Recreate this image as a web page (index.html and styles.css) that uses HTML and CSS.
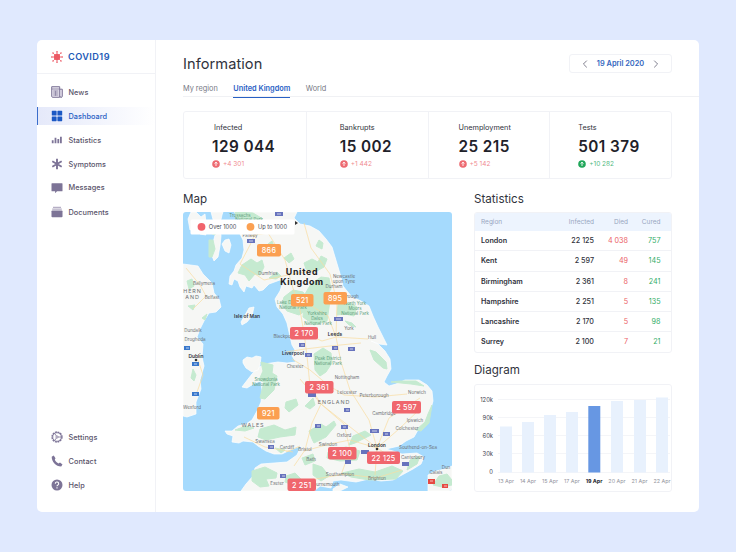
FILE: index.html
```html
<!DOCTYPE html>
<html lang="en">
<head>
<meta charset="utf-8">
<title>COVID19 Dashboard</title>
<link rel="stylesheet" href="styles.css">
</head>
<body>
<div class="app">
  <aside class="sidebar">
    <div class="logo">
      <svg width="12" height="12" viewBox="0 0 12 12"><circle cx="6" cy="6" r="3.2" fill="#ec5b66"/><path d="M6 .8v10.400M.8 6h10.400M2.200 2.200l7.600 7.600M9.800 2.200l-7.600 7.600" stroke="#ec5b66" stroke-width=".8"/><g fill="#ec5b66"><circle cx="6" cy=".8" r=".8"/><circle cx="6" cy="11.200" r=".8"/><circle cx=".8" cy="6" r=".8"/><circle cx="11.200" cy="6" r=".8"/><circle cx="2" cy="2" r=".8"/><circle cx="10" cy="2" r=".8"/><circle cx="2" cy="10" r=".8"/><circle cx="10" cy="10" r=".8"/></g></svg>
      <span>COVID19</span>
    </div>
    <nav class="nav">
      <a class="item"><svg class="icon" viewBox="0 0 12 12"><path d="M.7.7h8v10.600H1.700a1 1 0 0 1-1-1zM8.700 3.200h2.600v7a1.200 1.200 0 0 1-2.400 0" fill="#e4dfec" stroke="#7d7497"/><path d="M.7 3h8M2.300 5h5M2.300 7h5M2.300 9h5M4.600 4.800v5" stroke="#7d7497" stroke-width=".7"/></svg>News</a>
      <a class="item active"><svg class="icon" viewBox="0 0 12 12" fill="#1c59c4"><rect x=".8" y=".8" width="4.800" height="4.800" rx=".6"/><rect x="6.400" y=".8" width="4.800" height="4.800" rx=".6"/><rect x=".8" y="6.400" width="4.800" height="4.800" rx=".6"/><rect x="6.400" y="6.400" width="4.800" height="4.800" rx=".6"/></svg>Dashboard</a>
      <a class="item"><svg class="icon" viewBox="0 0 12 12" fill="#7d7497"><path d="M.8 6.200h1.800v3H.8zM3.600 3.800h1.800v5.400H3.600zM6.400 5h1.800v4.200H6.400zM9 2.800h1.800v6.400H9z"/></svg>Statistics</a>
      <a class="item"><svg class="icon" viewBox="0 0 12 12"><path d="M6 .8v10.400M1.300 3.300l9.400 5.400M10.700 3.300L1.300 8.700" stroke="#7d7497" stroke-width="1.900"/></svg>Symptoms</a>
      <a class="item up"><svg class="icon" viewBox="0 0 12 12"><path d="M1 1.300h10q.5 0 .5.500v7q0 .5-.5.500H6l-1.900 2v-2H1q-.5 0-.5-.5v-7q0-.5.500-.5z" fill="#7d7497"/></svg>Messages</a>
      <a class="item"><svg class="icon" viewBox="0 0 12 12"><path d="M2 .8h8v1.200H2zM1.200 2.500h9.600v1.300H1.200z" fill="#b6afc5"/><rect x=".5" y="4.500" width="11" height="6.800" rx=".8" fill="#7d7497"/></svg>Documents</a>
    </nav>
    <nav class="nav bottom">
      <a class="item"><svg class="icon" viewBox="0 0 12 12" fill="none" stroke="#7d7497"><circle cx="6" cy="6" r="5" stroke-width="1.300" stroke-dasharray="1.900 .718"/><circle cx="6" cy="6" r="4.300" stroke-width=".9"/><circle cx="6" cy="6" r="1.100" stroke-width=".8"/><path d="M7 6h3M5.400 5L3.800 2.600M5.400 7L3.800 9.400" stroke-width=".8"/></svg>Settings</a>
      <a class="item"><svg class="icon" viewBox="0 0 12 12"><path d="M2.700.5L.7 1.700C.5 6.700 5.200 11.500 10.200 11.400L11.500 9.400 9 7.500 7.500 8.400C6 7.700 4.600 6.300 3.800 4.700L4.500 3.200z" fill="#7d7497"/></svg>Contact</a>
      <a class="item"><svg class="icon" viewBox="0 0 12 12"><circle cx="6" cy="6" r="5.500" fill="#7d7497"/><path d="M4.300 4.700a1.700 1.600 0 1 1 2.600 1.300Q6 6.500 6 7.300M6 8.300v1.100" stroke="#fff" fill="none" stroke-width="1.100"/></svg>Help</a>
    </nav>
  </aside>

  <main class="main">
    <header class="head">
      <h1>Information</h1>
      <div class="date">
        <svg width="6" height="8" viewBox="0 0 6 8"><path d="M4.800.6L1.400 4l3.400 3.400"/></svg>
        <span>19 April 2020</span>
        <svg width="6" height="8" viewBox="0 0 6 8"><path d="M1.200.6L4.600 4 1.200 7.400"/></svg>
      </div>
    </header>
    <div class="tabs"><span class="tab region">My region</span><span class="tab on">United Kingdom</span><span class="tab">World</span></div>

    <section class="cards">
      <div class="card c1"><span class="label">Infected</span><b class="num">129 044</b><span class="delta"><svg viewBox="0 0 8 8"><circle cx="4" cy="4" r="3.800"/><path d="M4 6V2.200M2.500 3.600L4 2.200l1.500 1.400"/></svg>+4 301</span></div>
      <div class="card c2"><span class="label">Bankrupts</span><b class="num">15 002</b><span class="delta"><svg viewBox="0 0 8 8"><circle cx="4" cy="4" r="3.800"/><path d="M4 6V2.200M2.500 3.600L4 2.200l1.500 1.400"/></svg>+1 442</span></div>
      <div class="card c3"><span class="label">Unemployment</span><b class="num">25 215</b><span class="delta"><svg viewBox="0 0 8 8"><circle cx="4" cy="4" r="3.800"/><path d="M4 6V2.200M2.500 3.600L4 2.200l1.500 1.400"/></svg>+5 142</span></div>
      <div class="card c4"><span class="label">Tests</span><b class="num">501 379</b><span class="delta good"><svg viewBox="0 0 8 8"><circle cx="4" cy="4" r="3.800"/><path d="M4 6V2.200M2.500 3.600L4 2.200l1.500 1.400"/></svg>+10 282</span></div>
    </section>

    <div class="columns">
      <section class="mapcol">
        <h2>Map</h2>
        <svg class="map" viewBox="183 212 269 279">
          <rect x="183" y="212" width="269" height="279" fill="#a5dafd"/>
          <g class="land">
            <path d="M234 212L241 220 237 228 243 240 244 250 242 258 236 265 234 271 230 276 229 284 232 285 234 279 238 281 240 287 244 292 246 286 252 288 254 285 259 291 263 290 269 284 280 280 283 282 280 291 275 299 277 307 283 314 287 323 289 332 292 345 295 350 292 356 296 362 287 363 278 362 264 364 258 368 252 374 245 383 242 387 247 388 255 383 261 381 262 390 261 402 257 411 252 420 246 424 238 426 232 431 225 431 227 434 233 436 232 442 239 443 243 441 253 442 258 446 266 451 274 454 282 454 290 450 301 446 297 455 287 462 274 463 261 464 255 468 253 476 246 484 241 491 314 491 320 486 331 488 333 481 341 480 356 482 369 479 381 481 393 480 402 475 413 469 421 464 424 457 417 453 402 454 393 451 386 449 399 446 406 441 414 437 418 430 426 423 430 412 433 401 432 391 427 385 419 380 405 380 396 384 389 386 384 382 387 376 391 369 390 359 385 351 378 344 371 341 379 344 387 345 382 335 378 327 373 316 369 306 361 301 352 297 347 291 343 286 341 277 338 267 335 257 332 247 326 239 319 231 310 226 300 224 294 218 297 212Z"/>
            <path d="M211 212L214 223 216 231 213 243 211 253 214 261 218 257 220 246 221 236 220 224 222 215 223 212ZM225 240l4-1 2 6-2 8-4-2-3-7ZM183 264L198 266 203 274 212 283 214 293 219 299 221 307 216 312 209 313 204 321 200 329 197 337 203 344 202 357 204 366 200 380 201 389 196 402 196 414 187 417 183 416ZM196 212L201 217 205 214 206 223 202 225 206 235 200 234 195 228 190 230 188 219 191 212ZM241 322l8-14 5-1-2 9-5 6-5 3ZM243 360l4-3 5 1 4-2 5 1-1 8-2 5-6 2-6-4-3-5ZM333 489l7-5 8 3-8 4-7 0ZM428 491L428 475 436 471 445 469 452 466V491Z"/>
          </g>
          <g class="green">
            <path d="M235 212l18 1 10 6-16 2-11-3ZM209 240l4 0 2 9-3 8-3 0ZM242 265l9-6 6 4 5-3 2 7-4 8-5-1-6 7-4-6-7-2ZM269 278l8-6 4 4-5 3ZM284 258l7-5 3 6-5 4ZM304 263l8-4 6 3 3-6 6 3-3 8-9 5-9-3ZM311 284l10-7 8 1 2 11-5 8-12 2-9-5ZM284 297l9-7 10 2 6 8-1 9-9 6-12-4-5-7ZM313 299l12-4 5 6-3 20-13 4-11-8 1-12ZM338 304l12-1 7 4-3 9-9-2-8 1ZM316 246l3-6 4 3-1 6ZM268 244l4-3 2 5-4 2ZM275 223l7-2 3 8-6 0ZM345 321l7 2 4 4-7-2ZM370 350l6 2 10 10 1 7-4-1-9-8ZM314 354l9-6 8 5 1 10-6 9-6 4-5-6ZM261 362l12 3-1 8 5 3-3 14-9 9-5-1 4-16-5-2 4-9ZM286 402l10-3 2 6-9 7-4-4ZM305 406l8-8 2 7-5 4ZM260 429l14-4 11 5 11-3-1 8-15 2-14 3-8-3ZM246 426l8 2-9 3-10-1ZM309 431l12-7 5 3 8-6 2 4-10 12-12 6-2-4ZM353 436l12-5 6 4-16 8-6 2ZM328 452l18-5 14 4-3 9-17 1-13-3ZM342 473l17-4 16 3 17-6 11 5-7 8-27 1-18-3ZM313 464l9 3 7 9-8 5-8-6ZM252 471l13-4 12 6-1 5-10 1 3 7-9 1-8-6ZM286 476l9-3 7 7-9 5-8-3ZM416 430l9-8 3-8 4-9-3 18-8 8ZM391 382l9-1 16 0 8 5-13-2ZM410 460l10-4-3 8-10 6Z"/>
            <path d="M193 369l3 6-2 6-3-3ZM187 281l5-2 2 7-5 3ZM188 306l7-1-2 5ZM202 318l5-4-2 6ZM439 476l8-2 5 6V485l-10 2-9-2ZM213 226l3 0-1 9-3-1ZM302 458l11-4 2 7-10 4ZM275 448l10 2-4 3Z"/>
          </g>
          <g class="roads">
            <path d="M249 236L268 233 285 260 292 285 300 310 304 333 307 356 310 386 321 404 345 423 377 448M304 223L311 248 330 274 337 302 336 337 341 362 350 390 369 420 377 448M261 221L250 245 240 264 264 280 288 275 316 270M286 352L305 349 330 346 361 343M292 359L310 370 328 385 344 395 375 397 407 394M304 451L330 444 350 440 377 448 396 460M286 452L300 446M294 466L305 450 312 423 321 404 300 379M341 475L350 450 344 424 321 404M377 448L399 429 420 409M377 448L389 418 420 398M375 475L377 448M290 487L310 480 345 474 376 478 402 470M244 437L265 447 293 452M186 268L200 285 206 296 193 309M198 360L203 375 196 395M310 305L328 316 336 337M304 333L322 341 336 337 368 339"/>
          </g>
          <g class="town">
            <text x="250" y="237">Paisley</text><text x="268" y="275">Dumfries</text><text x="344" y="278">Newcastle</text><text x="344" y="283">upon Tyne</text><text x="334" y="288">Durham</text><text x="351" y="298">brough</text><text x="284" y="338">Blackpool</text><text x="349" y="330">York</text><text x="372" y="339">Hull</text><text x="295" y="368">Chester</text><text x="347" y="379">Nottingham</text><text x="347" y="394">Leicester</text><text x="374" y="397">Peterborough</text><text x="417" y="394">Norwich</text><text x="384" y="415">Cambridge</text><text x="415" y="422">Ipswich</text><text x="407" y="430">Colchester</text><text x="418" y="449">Southend-on-Sea</text><text x="413" y="459">Canterbury</text><text x="344" y="437">Oxford</text><text x="328" y="446">Swindon</text><text x="305" y="451">Bristol</text><text x="311" y="461">Bath</text><text x="287" y="449">Cardiff</text><text x="265" y="443">Swansea</text><text x="340" y="476">Southampton</text><text x="325" y="486">Bournemouth</text><text x="377" y="480">Brighton</text><text x="277" y="485">Exeter</text><text x="436" y="474">Calais</text><text x="446" y="469">Dun</text><text x="204" y="285">Ballymena</text><text x="212" y="299">Belfast</text><text x="193" y="332">Dundalk</text><text x="195" y="341">Drogheda</text><text x="192" y="409">Wexford</text>
          </g>
          <g class="town dark"><text x="335" y="336">Leeds</text><text x="293" y="355">Liverpool</text><text x="196" y="358">Dublin</text><text x="377" y="447">London</text><text x="247" y="318">Isle of Man</text></g>
          <g class="park">
            <text x="240" y="217">Trossachs</text><text x="249" y="221">National Park</text><text x="290" y="304">Lake District</text><text x="293" y="309">National Park</text><text x="317" y="315">Yorkshire</text><text x="317" y="320">Dales</text><text x="318" y="325">National Park</text><text x="355" y="305">North York</text><text x="355" y="310">Moors</text><text x="355" y="315">National Park</text><text x="328" y="360">Peak District</text><text x="328" y="365">National Park</text><text x="266" y="381">Snowdonia</text><text x="266" y="386">National Park</text>
          </g>
          <g class="area"><text x="334" y="404">ENGLAND</text><text x="253" y="427">WALES</text><text x="192.500" y="293">HERN</text><text x="192.500" y="299">AND</text></g>
          <g class="shields">
            <path d="M275 212h8v4h-8zM247 239h8v4h-8zM334 317h9v4h-9zM299 343h6v4h-6zM305 353h7v4h-7zM332 346h6v4h-6zM348 347h7v4h-7zM308 393h8v4h-8zM344 408h6v4h-6zM315 424h6v4h-6zM341 425h7v4h-7zM370 429h9v4h-9zM383 432h7v4h-7zM268 445h6v4h-6zM280 474h6v4h-6zM361 450h8v4h-8zM345 460h6v4h-6zM402 462h7v4h-7z" fill="#6874bd"/>
            <path d="M184 346h6v4h-6zM192 362h7v4h-7zM192 392h7v4h-7z" fill="#3978cc"/>
            <path d="M428 479h7v5h-7zM442 484h6v4h-6z" fill="#e64a43"/>
            <path d="M249 241h4M277 214h4M336 319h5M301 345h3M307 355h3M334 348h3M350 349h3M346 410h3M317 426h3M343 427h3M372 431h5M385 434h3M270 447h3M282 476h3M186 348h3M194 364h3M194 394h3M430 481h3M444 486h3" stroke="#fff" stroke-width="1.200" opacity=".65"/>
          </g>
          <g fill="#333"><circle cx="196" cy="360" r="1.300"/><circle cx="377" cy="449" r="1.300"/><path d="M295 221l3 2-3 2z"/></g>
          <g class="country"><text x="302" y="275">United</text><text x="302" y="285">Kingdom</text></g>
          <g class="legend"><rect x="190.500" y="219.500" width="104" height="15" rx="1.500" fill="#fff"/><circle cx="201.500" cy="226.800" r="3.900" fill="#f1646c"/><circle cx="250.500" cy="226.800" r="3.900" fill="#fba052"/><text x="208.800" y="229" textLength="27.500">Over 1000</text><text x="258" y="229" textLength="29">Up to 1000</text></g>
          <g fill="#fb9f51"><rect x="257" y="244" width="24" height="12.500" rx="2"/><rect x="291" y="294" width="22.500" height="12.500" rx="2"/><rect x="323.500" y="292" width="23.500" height="12.500" rx="2"/><rect x="257" y="407" width="22.500" height="12.500" rx="2"/></g>
          <g fill="#f0666d"><rect x="290" y="327" width="28" height="12.500" rx="2"/><rect x="305" y="381" width="28.500" height="12.500" rx="2"/><rect x="392" y="401" width="29" height="12.500" rx="2"/><rect x="328" y="447" width="28.500" height="12.500" rx="2"/><rect x="367" y="451.500" width="33" height="12.500" rx="2"/><rect x="287.500" y="478.500" width="28.500" height="12.500" rx="2"/></g>
          <g class="pin"><text x="269" y="253">866</text><text x="302.300" y="303">521</text><text x="335.200" y="301">895</text><text x="268.300" y="416">921</text><text x="304" y="336">2 170</text><text x="319.200" y="390">2 361</text><text x="406.500" y="410">2 597</text><text x="342.200" y="456">2 100</text><text x="383.500" y="460.500">22 125</text><text x="301.700" y="487.500">2 251</text></g>
        </svg>
      </section>

      <div class="right">
        <section>
          <h2>Statistics</h2>
          <div class="table">
            <div class="row th"><span>Region</span><span>Infected</span><span>Died</span><span>Cured</span></div>
            <div class="row"><b>London</b><span>22 125</span><i>4 038</i><em>757</em></div>
            <div class="row"><b>Kent</b><span>2 597</span><i>49</i><em>145</em></div>
            <div class="row"><b>Birmingham</b><span>2 361</span><i>8</i><em>241</em></div>
            <div class="row"><b>Hampshire</b><span>2 251</span><i>5</i><em>135</em></div>
            <div class="row"><b>Lancashire</b><span>2 170</span><i>5</i><em>98</em></div>
            <div class="row"><b>Surrey</b><span>2 100</span><i>7</i><em>21</em></div>
          </div>
        </section>
        <section>
          <h2 class="h-diagram">Diagram</h2>
          <svg class="chart" width="198" height="108" viewBox="474 384 198 108">
            <rect x="474.500" y="384.500" width="197" height="107" rx="2.500" fill="#fff" stroke="#f1f2f6"/>
            <path d="M498 399.500h172M498 417.500h172M498 435.500h172M498 453.500h172M498 472.500h172" stroke="#f4f5f8"/>
            <g class="ylab"><text x="493" y="402">120k</text><text x="493" y="420">90k</text><text x="493" y="438">60k</text><text x="493" y="456">30k</text><text x="493" y="474">0</text></g>
            <g fill="#e8f1fd"><rect x="500" y="426.500" width="12" height="46"/><rect x="522" y="422" width="12" height="50.500"/><rect x="544" y="415" width="12" height="57.500"/><rect x="566" y="412" width="12" height="60.500"/><rect x="611" y="401" width="12" height="71.500"/><rect x="634" y="400" width="12" height="72.500"/><rect x="656" y="397.500" width="12" height="75"/></g>
            <rect x="588.300" y="406" width="12" height="66.500" fill="#6797e3"/>
            <g class="xlab"><text x="506" y="483">13 Apr</text><text x="528" y="483">14 Apr</text><text x="550" y="483">15 Apr</text><text x="572" y="483">17 Apr</text><text x="594" y="483" class="now">19 Apr</text><text x="617" y="483">20 Apr</text><text x="639.500" y="483">21 Apr</text><text x="662" y="483">22 Apr</text></g>
          </svg>
        </section>
      </div>
    </div>
  </main>
</div>
</body>
</html>
```
FILE: styles.css
```css
* { box-sizing: border-box; }
body { margin: 0; width: 736px; height: 552px; overflow: hidden; background: #e0e9fe; font-family: Inter, "Liberation Sans", sans-serif; color: #30323c; padding: 40px 37px; }
.app { display: flex; width: 662px; height: 471.5px; background: #fff; border-radius: 5px; overflow: hidden; }
.sidebar { width: 119px; flex: none; border-right: 1px solid #f1f2f6; display: flex; flex-direction: column; }
.logo { height: 34px; display: flex; align-items: center; gap: 5px; padding-left: 14px; border-bottom: 1px solid #f1f2f6; font-size: 9.2px; font-weight: 600; letter-spacing: .4px; color: #2359b7; }
.nav { padding-top: 6px; }
.nav.bottom { margin-top: auto; padding: 0 0 14.5px; }
.item { height: 24px; display: flex; align-items: center; gap: 5.5px; padding-left: 14px; font-size: 7.3px; font-weight: 500; letter-spacing: .06px; color: #5a546b; }
.icon { width: 12px; height: 12px; flex: none; }
.item.active { height: 18px; margin: 3px 0; padding-left: 13px; border-left: 1px solid #3a6dcb; background: linear-gradient(90deg, #e5e9fa, #fff); color: #2860c4; }
.item.up { height: 23px; margin-bottom: 1px; }
.main { flex: 1; min-width: 0; padding-left: 27px; }
.head { display: flex; justify-content: space-between; align-items: flex-start; padding: 14px 27px 0 0; height: 40px; }
h1 { margin: 0; font-size: 14.6px; line-height: 20px; font-weight: 400; letter-spacing: .06px; }
.date { width: 103px; height: 19px; border: 1px solid #f1f2f6; border-radius: 3px; display: flex; align-items: center; justify-content: center; gap: 9px; font-size: 7.4px; font-weight: 600; color: #3568c0; white-space: nowrap; }
.date svg { fill: none; stroke: #7f7e8d; }
.tabs { height: 17px; display: flex; gap: 15.5px; border-bottom: 1px solid #f0f1f4; font-size: 7.35px; line-height: 17px; color: #777985; }
.tab.on { height: 18px; border-bottom: 1.5px solid #2860c4; color: #2860c4; font-weight: 600; }
.cards { width: 489px; height: 68px; margin-top: 14px; display: grid; grid-template-columns: repeat(4, 1fr); border: 1px solid #f1f2f6; border-radius: 3px; }
.card { border-left: 1px solid #f1f2f6; padding-top: 10px; display: flex; flex-direction: column; }
.c1 { border-left: 0; padding-left: 28px; }
.c2 { padding-left: 33px; }
.c3 { padding-left: 30px; }
.c4 { padding-left: 28px; }
.label { font-size: 7.3px; line-height: 11px; }
.c1 .label { padding-left: 2px; }
.num { font-size: 15.3px; line-height: 18px; margin-top: 4.5px; font-weight: 600; letter-spacing: .45px; color: #1f222a; }
.delta { display: flex; align-items: center; gap: 3px; margin-top: 2.5px; height: 11px; font-size: 6.5px; color: #f08c91; }
.delta svg { width: 8px; height: 8px; fill: #ed6b72; }
.delta path { fill: none; stroke: #fff; stroke-width: .9; }
.delta.good { color: #52ba7f; }
.delta.good svg { fill: #21a75a; }
.columns { display: flex; gap: 22px; }
h2 { margin: 11px 0 4px; height: 18px; font-size: 11.6px; line-height: 18px; font-weight: 400; }
.mapcol { width: 269px; flex: none; }
.map { display: block; width: 269px; height: 279px; border-radius: 3px; }
.land { fill: #f6f7f5; stroke: #fff; stroke-width: .7; stroke-linejoin: round; }
.green { fill: #c5ead0; stroke: #c5ead0; stroke-width: 1; stroke-linejoin: round; }
.roads { fill: none; stroke: #f9dda0; stroke-width: .7; stroke-linejoin: round; }
.map text { text-anchor: middle; }
.town { font-size: 4.5px; fill: #6b6f74; }
.town.dark { font-size: 4.9px; font-weight: 600; fill: #32363b; }
.park { font-size: 4.4px; fill: #5b9b79; }
.area { font-size: 5.4px; letter-spacing: .9px; fill: #6d7073; }
.country { font-size: 8.8px; font-weight: 700; letter-spacing: .7px; fill: #1e2023; }
.map .legend text { text-anchor: start; font-size: 5.7px; fill: #474954; }
.pin { font-size: 7.2px; font-weight: 500; letter-spacing: .25px; fill: #fff; }
.right { width: 198px; }
.table { border: 1px solid #f1f2f6; border-radius: 3px; height: 141px; overflow: hidden; }
.row { display: grid; grid-template-columns: 68.5px 44.5px 34px 32.500px; padding-left: 6px; height: 20.300px; line-height: 19.300px; font-size: 7.200px; border-bottom: 1px solid #f1f2f6; text-align: right; }
.row > :first-child { text-align: left; }
.row:last-child { border-bottom: 0; }
.row.th { height: 18px; line-height: 18px; background: #edf4fe; color: #98a6c0; font-size: 6.5px; border: 0; }
.row b { font-weight: 600; }
.row span { font-weight: 500; }
.row.th span { font-weight: 400; }
.row i { font-style: normal; color: #eb5e65; }
.row em { font-style: normal; color: #32ad67; }
.h-diagram { margin-top: 8px; margin-bottom: 5px; }
.chart { display: block; }
.ylab { font-size: 5.800px; fill: #40434d; text-anchor: end; }
.xlab { font-size: 5.400px; fill: #92949d; text-anchor: middle; }
.now { font-weight: 700; fill: #24262e; }
```
